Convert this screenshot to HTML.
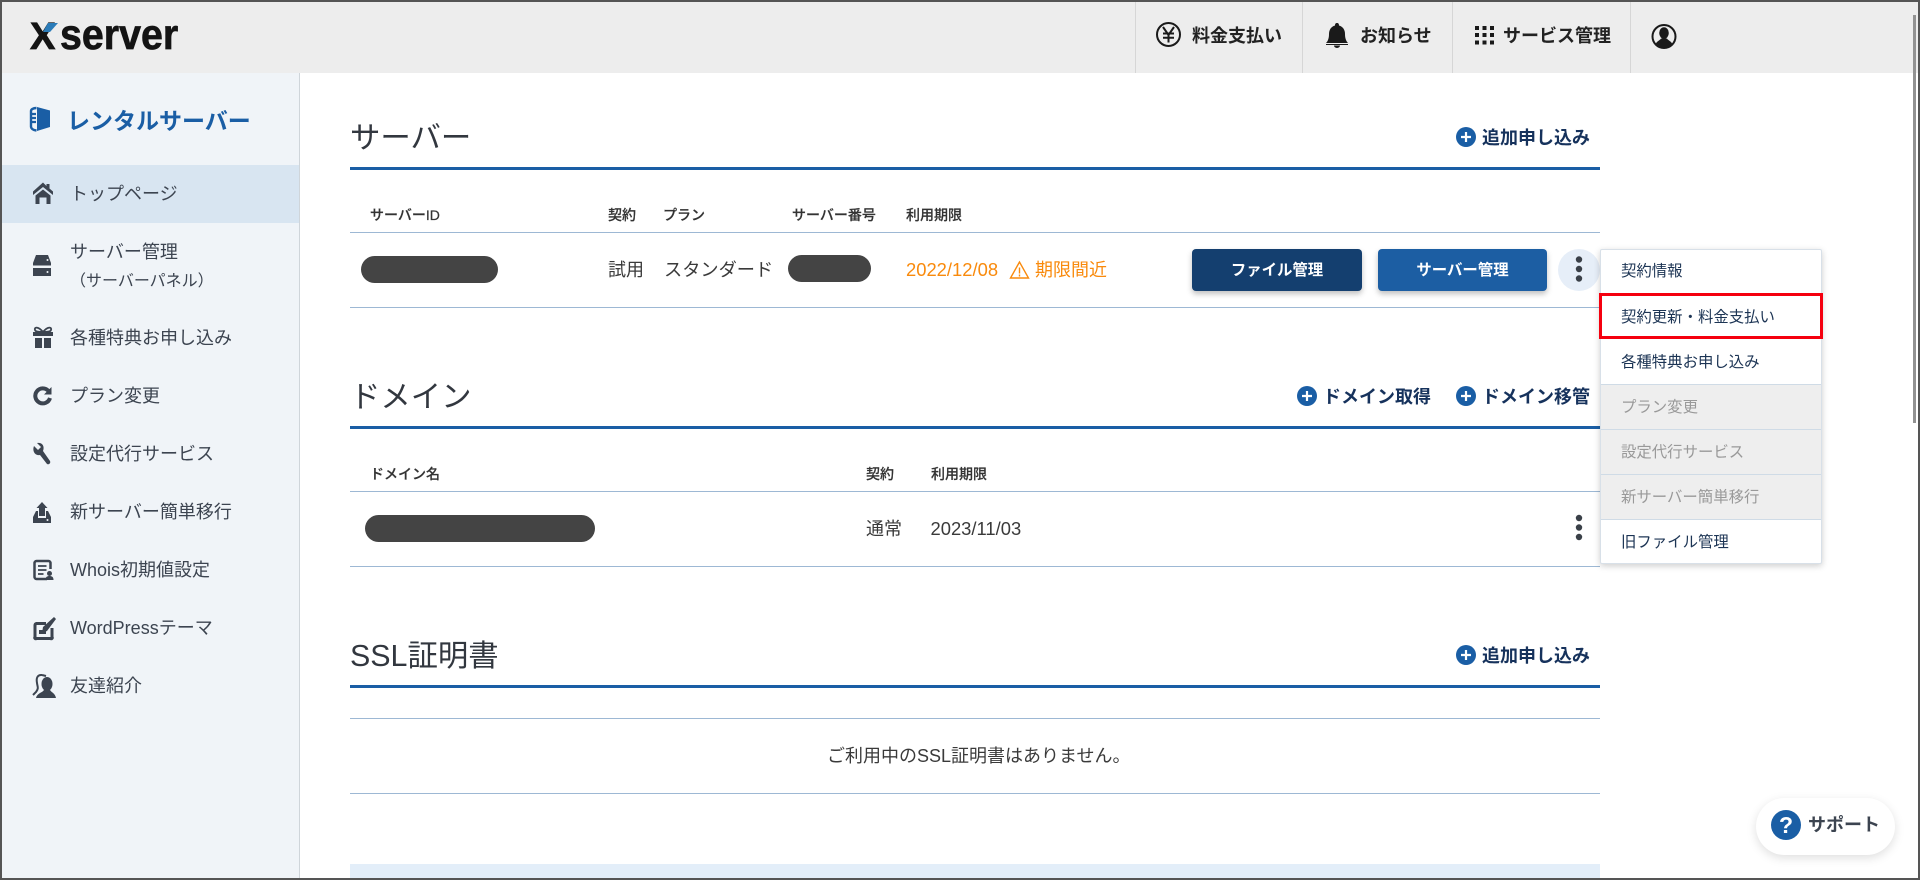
<!DOCTYPE html>
<html lang="ja">
<head>
<meta charset="utf-8">
<title>Xserver レンタルサーバー</title>
<style>
html,body{margin:0;padding:0;width:1920px;height:880px;overflow:hidden;background:#fff}
body{position:relative;font-family:"Liberation Sans","Noto Sans CJK JP",sans-serif;color:#333}
.r{position:absolute}
.t{position:absolute;white-space:nowrap;line-height:1}
.n{font-size:18px;color:#3c4450;left:70px}
.h1{font-size:30.4px;color:#32373f;left:350px}
.hd{font-size:18px;font-weight:700;color:#16325c}
.top{font-size:18px;font-weight:700;color:#222}
.th{font-size:14px;color:#333;font-weight:500;-webkit-text-stroke:.2px #333}
.td{font-size:18px;color:#3a3a3a}
.line{position:absolute;left:350px;width:1250px;height:1px;background:#9db8d4}
.bl{position:absolute;left:350px;width:1250px;height:3px;background:#1a5ea5}
.pill{position:absolute;background:#444;border-radius:14px;height:27px}
.btn{position:absolute;top:249px;height:42px;width:170px;border-radius:4px;color:#fff;font-size:15.4px;font-weight:700;text-align:center;line-height:43px;box-shadow:0 3px 6px rgba(0,0,0,.25)}
.menu{position:absolute;left:1600px;top:249px;width:220px;height:313px;background:#fff;border:1px solid #d8e0e8;box-sizing:content-box;box-shadow:0 2px 7px rgba(0,0,0,.2);border-radius:2px}
.mi{position:absolute;left:0;width:220px;height:45px;box-sizing:border-box;padding-left:20px;font-size:15.4px;line-height:44px;color:#1c3454;white-space:nowrap}
.dis{background:#eee;color:#999;border-top:1px solid #cfdbe6;line-height:46px}
</style>
</head>
<body>
<!-- backgrounds -->
<div class="r" style="left:0;top:0;width:1920px;height:73px;background:#ededed"></div>
<div class="r" style="left:0;top:73px;width:299px;height:807px;background:#f0f4f8;border-right:1px solid #cfd5da"></div>
<div class="r" style="left:0;top:165px;width:299px;height:58px;background:#d8e5f1"></div>
<div class="r" style="left:1135px;top:2px;width:1px;height:71px;background:#d6d6d6"></div>
<div class="r" style="left:1302px;top:2px;width:1px;height:71px;background:#d6d6d6"></div>
<div class="r" style="left:1452px;top:2px;width:1px;height:71px;background:#d6d6d6"></div>
<div class="r" style="left:1630px;top:2px;width:1px;height:71px;background:#d6d6d6"></div>
<div class="r" style="left:350px;top:864px;width:1250px;height:16px;background:#e3eef9"></div>

<!-- logo -->
<div class="t" style="left:30px;top:18px;font-size:38px;font-weight:700;color:#141414;-webkit-text-stroke:.8px #141414">X</div>
<div class="t" style="left:60px;top:14px;font-size:43px;font-weight:700;color:#141414;-webkit-text-stroke:.7px #141414;transform:scaleX(.915);transform-origin:0 0">server</div>

<!-- header text -->
<div class="t top" style="left:1192px;top:27px">料金支払い</div>
<div class="t top" style="left:1360px;top:27px">お知らせ</div>
<div class="t top" style="left:1503px;top:27px">サービス管理</div>

<!-- sidebar text -->
<div class="t" style="left:67px;top:110px;font-size:23px;font-weight:700;color:#1a5ea5">レンタルサーバー</div>
<div class="t n" style="top:185px">トップページ</div>
<div class="t n" style="top:243px">サーバー管理</div>
<div class="t n" style="top:274px;font-size:16px">（サーバーパネル）</div>
<div class="t n" style="top:329px">各種特典お申し込み</div>
<div class="t n" style="top:387px">プラン変更</div>
<div class="t n" style="top:445px">設定代行サービス</div>
<div class="t n" style="top:503px">新サーバー簡単移行</div>
<div class="t n" style="top:561px">Whois初期値設定</div>
<div class="t n" style="top:619px">WordPressテーマ</div>
<div class="t n" style="top:677px">友達紹介</div>

<!-- section 1 -->
<div class="t h1" style="top:123px">サーバー</div>
<div class="bl" style="top:167px"></div>
<div class="t hd" style="left:1482px;top:129px">追加申し込み</div>
<div class="t th" style="left:370px;top:208px">サーバーID</div>
<div class="t th" style="left:608px;top:208px">契約</div>
<div class="t th" style="left:663px;top:208px">プラン</div>
<div class="t th" style="left:792px;top:208px">サーバー番号</div>
<div class="t th" style="left:906px;top:208px">利用期限</div>
<div class="line" style="top:232px"></div>
<div class="pill" style="left:361px;top:256px;width:137px"></div>
<div class="t td" style="left:608px;top:261px">試用</div>
<div class="t td" style="left:664px;top:261px;font-size:18.200px">スタンダード</div>
<div class="pill" style="left:788px;top:255px;width:83px"></div>
<div class="t td" style="left:906px;top:261px;font-size:18.400px;color:#f98a0c">2022/12/08</div>
<div class="t td" style="left:1035px;top:261px;color:#f98a0c">期限間近</div>
<div class="btn" style="left:1192px;background:#143f6f">ファイル管理</div>
<div class="btn" style="left:1378px;width:169px;background:#1c5ea3">サーバー管理</div>
<div class="r" style="left:1558px;top:249px;width:42px;height:42px;border-radius:50%;background:#e6eef8"></div>
<div class="line" style="top:307px"></div>

<!-- section 2 -->
<div class="t h1" style="top:382px">ドメイン</div>
<div class="bl" style="top:426px"></div>
<div class="t hd" style="left:1323px;top:388px">ドメイン取得</div>
<div class="t hd" style="left:1482px;top:388px">ドメイン移管</div>
<div class="t th" style="left:370px;top:467px">ドメイン名</div>
<div class="t th" style="left:866px;top:467px">契約</div>
<div class="t th" style="left:931px;top:467px">利用期限</div>
<div class="line" style="top:491px"></div>
<div class="pill" style="left:365px;top:515px;width:230px"></div>
<div class="t td" style="left:866px;top:520px">通常</div>
<div class="t td" style="left:930.500px;top:520px;font-size:18.400px">2023/11/03</div>
<div class="line" style="top:566px"></div>

<!-- section 3 -->
<div class="t h1" style="top:641px">SSL証明書</div>
<div class="bl" style="top:685px"></div>
<div class="t hd" style="left:1482px;top:647px">追加申し込み</div>
<div class="line" style="top:718px"></div>
<div class="t td" style="left:827px;top:747px">ご利用中のSSL証明書はありません。</div>
<div class="line" style="top:793px"></div>

<!-- dropdown -->
<div class="menu">
  <div class="mi" style="top:0">契約情報</div>
  <div class="mi" style="top:46px">契約更新・料金支払い</div>
  <div class="mi" style="top:91px">各種特典お申し込み</div>
  <div class="mi dis" style="top:134px">プラン変更</div>
  <div class="mi dis" style="top:179px">設定代行サービス</div>
  <div class="mi dis" style="top:224px">新サーバー簡単移行</div>
  <div class="mi" style="top:269px;border-top:1px solid #cfdbe6;line-height:46px;height:44px">旧ファイル管理</div>
</div>
<div class="r" style="left:1599px;top:293px;width:224px;height:46px;box-sizing:border-box;border:3px solid #f5000f"></div>

<!-- support -->
<div class="r" style="left:1756px;top:798px;width:139px;height:57px;border-radius:29px;background:#fff;box-shadow:0 3px 10px rgba(0,0,0,.13)"></div>
<div class="r" style="left:1771px;top:810px;width:30px;height:30px;border-radius:50%;background:#1a5ea5"></div>
<div class="t" style="left:1771px;top:814px;width:30px;text-align:center;font-size:23px;font-weight:700;color:#fff">?</div>
<div class="t" style="left:1808px;top:816px;font-size:18px;font-weight:700;color:#3c4450">サポート</div>

<!-- icons -->
<svg class="r" style="left:0;top:0" width="1920" height="880" viewBox="0 0 1920 880" fill="none">
  <!-- logo slash -->
  <path d="M48 23H58L50 32H43Z" fill="#2b7cb9"/>
  <!-- sidebar brand icon -->
  <path d="M37 107L50 110.500V127L37 131Z" fill="#1a5ea5"/>
  <path d="M36.500 108C33 108 31 109.500 31 111V126.500C31 128.500 33 130 36.500 130.500" stroke="#1a5ea5" stroke-width="2.400"/>
  <path d="M31 114H36M31 118H36M31 122H36" stroke="#1a5ea5" stroke-width="2.200"/>
  <!-- header icons -->
  <circle cx="1168.500" cy="34.500" r="11.500" stroke="#1a1a1a" stroke-width="2"/>
  <path d="M1163 27L1168.500 35L1174 27M1168.500 35V42.500M1163 33.500H1174M1163 37.800H1174" stroke="#1a1a1a" stroke-width="2"/>
  <path d="M1337 23C1335.500 23 1335 24 1335 25.500C1331 26.500 1329 30 1329 34C1329 38 1328 41 1326 43H1348C1346 41 1345 38 1345 34C1345 30 1343 26.500 1339 25.500C1339 24 1338.500 23 1337 23Z" fill="#1a1a1a"/>
  <path d="M1326 44.500H1348" stroke="#1a1a1a" stroke-width="1"/>
  <path d="M1334 45.500H1340A3 2.500 0 0 1 1334 45.500Z" fill="#1a1a1a"/>
  <g fill="#1a1a1a">
    <rect x="1475" y="26" width="4" height="4"/><rect x="1482.500" y="26" width="4" height="4"/><rect x="1490" y="26" width="4" height="4"/>
    <rect x="1475" y="33" width="4" height="4"/><rect x="1482.500" y="33" width="4" height="4"/><rect x="1490" y="33" width="4" height="4"/>
    <rect x="1475" y="40.500" width="4" height="4"/><rect x="1482.500" y="40.500" width="4" height="4"/><rect x="1490" y="40.500" width="4" height="4"/>
  </g>
  <circle cx="1664" cy="36.500" r="11.500" stroke="#1a1a1a" stroke-width="2"/>
  <ellipse cx="1664" cy="33" rx="4.800" ry="5.800" fill="#1a1a1a"/>
  <path d="M1655.500 44.500C1656.500 41 1660 40.500 1661 38.500H1667C1668 40.500 1671.500 41 1672.500 44.500C1669 48 1659 48 1655.500 44.500Z" fill="#1a1a1a"/>
  <!-- sidebar icons -->
  <g fill="#3c4450">
    <path d="M43 182.500L33 191.500V195L43 187L53 195V191.500L49.500 188.500V184H46.500V186Z"/>
    <path d="M35.500 195.500L43 189.500L50.500 195.500V204H46.500V197.500H39.500V204H35.500Z"/>
    <path d="M36 255H48L51 263V265.500H33V263Z"/>
    <rect x="33" y="268" width="18" height="8"/>
    <path d="M33 332H53V336H33ZM35 338H42V348H35ZM44 338H51V348H44Z"/>
    <path d="M51.500 387V394.500H44Z"/>
    <path d="M37 443L41 447L38 450L34 446C32 451 35 456 40 455L47 464C49 465 51 463 50 461L43 451C45 446 42 442 37 443Z"/>
    <path d="M42 502L47.500 508H45V516H39V508H36.500Z"/>
    <path d="M36 511H38V518H46V511H48L51 517V523H33V517Z"/>
    <circle cx="49.500" cy="573.500" r="2.500"/>
    <path d="M45.500 580C45.500 577 47 576 49.500 576C52 576 53.500 577 53.500 580Z"/>
    <ellipse cx="47" cy="684" rx="5.500" ry="7"/>
    <path d="M36 698C37 693 42 693 44 690H50C52 693 55 693 56 698Z"/>
    <path d="M54 617L56 619L47 631L42 633L43 627Z"/>
    <path d="M39 630H46V634H39Z"/>
  </g>
  <g stroke="#3c4450">
    <path d="M43 332C38 326 34 327 35 330C35.500 332 39 332 43 332C47 332 50.500 332 51 330C52 327 48 326 43 332Z" stroke-width="1.800"/>
    <path d="M48.500 391A7.500 7.500 0 1 0 50 398" stroke-width="4"/>
    <path d="M47 579H36.500A2 2 0 0 1 34.500 577V563A2 2 0 0 1 36.500 561H48.500A2 2 0 0 1 50.500 563V569" stroke-width="2.500"/>
    <path d="M38 566H46.500M38 570H46.500M38 574H43.500" stroke-width="1.800"/>
    <path d="M46 623.500H36.500A2 2 0 0 0 35 625.500V637A1 1 0 0 0 36.500 638.500H50.500A1 1 0 0 0 52 637V628" stroke-width="3"/>
    <path d="M42 675C37.500 674.500 36 678 37 683C37.500 687 39 688 36 692L33 695" stroke-width="2"/>
    <path d="M42 675L46 676" stroke-width="2"/>
  </g>
  <circle cx="47.500" cy="260" r="1" fill="#f0f4f8"/>
  <circle cx="47.500" cy="272" r="1" fill="#f0f4f8"/>
  <circle cx="47.500" cy="520" r="1" fill="#f0f4f8"/>
  <!-- warning -->
  <path d="M1019.500 262L1010.500 278H1028.500Z" stroke="#f98a0c" stroke-width="1.400"/>
  <path d="M1019.500 267.500V273.500M1019.500 274.500V276.500" stroke="#f98a0c" stroke-width="1.400"/>
  <!-- plus buttons -->
  <g>
    <circle cx="1466" cy="137" r="10" fill="#1a5ea5"/><path d="M1461 137H1471M1466 132V142" stroke="#fff" stroke-width="2.200"/>
    <circle cx="1307" cy="396" r="10" fill="#1a5ea5"/><path d="M1302 396H1312M1307 391V401" stroke="#fff" stroke-width="2.200"/>
    <circle cx="1466" cy="396" r="10" fill="#1a5ea5"/><path d="M1461 396H1471M1466 391V401" stroke="#fff" stroke-width="2.200"/>
    <circle cx="1466" cy="655" r="10" fill="#1a5ea5"/><path d="M1461 655H1471M1466 650V660" stroke="#fff" stroke-width="2.200"/>
  </g>
  <!-- kebabs -->
  <g fill="#3a4048">
    <circle cx="1579" cy="259.500" r="3.200"/><circle cx="1579" cy="269" r="3.200"/><circle cx="1579" cy="278.500" r="3.200"/>
    <circle cx="1579" cy="518" r="3.200"/><circle cx="1579" cy="527.500" r="3.200"/><circle cx="1579" cy="537" r="3.200"/>
  </g>
</svg>

<!-- scrollbar + frame -->
<div class="r" style="left:1913px;top:15px;width:3px;height:408px;background:#929292"></div>
<div class="r" style="left:0;top:0;width:1920px;height:880px;box-sizing:border-box;border:2px solid #555"></div>
</body>
</html>
